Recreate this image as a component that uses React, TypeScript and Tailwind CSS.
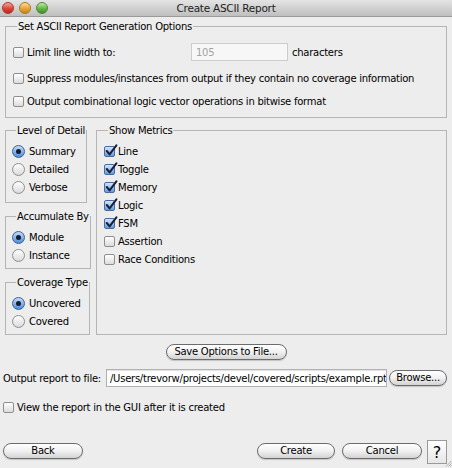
import React from "react";

function Check({ checked }: { checked?: boolean }) {
  return (
    <span
      className={
        checked
          ? "relative inline-block w-[11px] h-[11px] shrink-0 rounded-[2px] border border-[#4a6a9c] bg-linear-to-b from-[#d3e6fa] to-[#5f9ce2]"
          : "relative inline-block w-[11px] h-[11px] shrink-0 rounded-[2px] border border-[#8e8e8e] bg-linear-to-b from-white to-[#dcdcdc]"
      }
    >
      {checked && (
        <svg className="absolute -top-[3px] left-[0px]" width="13" height="13" viewBox="0 0 13 13">
          <path d="M1.8 7 L4.6 10.4 L11.4 1.4" stroke="#15203c" strokeWidth="2" fill="none" strokeLinecap="round" strokeLinejoin="round" />
        </svg>
      )}
    </span>
  );
}

function Radio({ on }: { on?: boolean }) {
  return (
    <span
      className={
        on
          ? "flex items-center justify-center w-[13px] h-[13px] shrink-0 rounded-full border border-[#3f5f93] bg-linear-to-b from-[#c4dcf7] to-[#4d8ddb]"
          : "flex items-center justify-center w-[13px] h-[13px] shrink-0 rounded-full border border-[#8e8e8e] bg-linear-to-b from-white to-[#dadada]"
      }
    >
      {on && <span className="w-[5px] h-[5px] rounded-full bg-[#121c33]" />}
    </span>
  );
}

function AquaButton({ label, className }: { label: string; className: string }) {
  return (
    <button
      className={
        "flex items-center justify-center rounded-full border border-[#6c6c6c] bg-linear-to-b from-white via-[#f1f1f1] to-[#d3d3d3] leading-none text-black shadow-[0_1px_1px_rgba(0,0,0,0.18)] " +
        className
      }
    >
      {label}
    </button>
  );
}

function RadioRow({ on, label }: { on?: boolean; label: string }) {
  return (
    <div className="flex h-[18px] items-center gap-[4px] whitespace-nowrap">
      <Radio on={on} />
      <span>{label}</span>
    </div>
  );
}

function CheckRow({ checked, label }: { checked?: boolean; label: string }) {
  return (
    <div className="flex h-[18px] items-center gap-[3px] whitespace-nowrap">
      <Check checked={checked} />
      <span>{label}</span>
    </div>
  );
}

function Legend({ children }: { children: React.ReactNode }) {
  return <legend className="ml-[4px] px-[1px] leading-[13px] whitespace-nowrap">{children}</legend>;
}

export default function App() {
  return (
    <div className="w-[452px] h-[468px] bg-[#ededed] flex flex-col text-[10px] tracking-[-0.25px] leading-[13px] text-black font-['DejaVu_Sans',sans-serif] overflow-hidden">
      {/* Title bar */}
      <div className="grid grid-cols-[1fr_auto_1fr] items-center h-[17px] shrink-0 bg-linear-to-b from-[#e4e4e4] to-[#bfbfbf] border-b border-[#9a9a9a]">
        <div className="flex items-center gap-[5px] pl-[2px]">
          <span className="w-[12px] h-[12px] rounded-full border border-[#a43a32] bg-linear-to-b from-[#f7a39c] via-[#e2483e] to-[#b8261d]" />
          <span className="w-[12px] h-[12px] rounded-full border border-[#a87a22] bg-linear-to-b from-[#fbdd9a] via-[#e9a93a] to-[#c98515]" />
          <span className="w-[12px] h-[12px] rounded-full border border-[#4b8a36] bg-linear-to-b from-[#c5eaa4] via-[#6cbc4b] to-[#3e8d2a]" />
        </div>
        <div className="text-[10.5px] text-[#222]">Create ASCII Report</div>
        <div />
      </div>

      <div className="flex flex-col flex-1 px-[5px] pt-[3px]">
        {/* Group 1 */}
        <fieldset className="h-[98px] border border-[#b5b5b5] pl-[7px]">
          <Legend>Set ASCII Report Generation Options</Legend>
          <div className="mt-[10px] flex h-[18px] items-center">
            <Check />
            <span className="ml-[3px] w-[164px]">Limit line width to:</span>
            <div className="w-[97px] h-[18px] border border-[#cdcdcd] bg-[#f7f7f7] text-[#a3a3a3] flex items-center pl-[4px]">105</div>
            <span className="ml-[4px]">characters</span>
          </div>
          <div className="mt-[8px]">
            <CheckRow label="Suppress modules/instances from output if they contain no coverage information" />
          </div>
          <div className="mt-[5px]">
            <CheckRow label="Output combinational logic vector operations in bitwise format" />
          </div>
        </fieldset>

        {/* Middle area */}
        <div className="mt-[6px] flex gap-[10px]">
          <div className="flex w-[81px] shrink-0 flex-col gap-[7px]">
            <fieldset className="h-[79px] border border-[#b5b5b5] pl-[6px]">
              <Legend>Level of Detail</Legend>
              <div className="mt-[5px]">
                <RadioRow on label="Summary" />
                <RadioRow label="Detailed" />
                <RadioRow label="Verbose" />
              </div>
            </fieldset>
            <fieldset className="h-[59px] border border-[#b5b5b5] pl-[6px]">
              <Legend>Accumulate By</Legend>
              <div className="mt-[5px]">
                <RadioRow on label="Module" />
                <RadioRow label="Instance" />
              </div>
            </fieldset>
            <fieldset className="h-[59px] border border-[#b5b5b5] pl-[6px]">
              <Legend>Coverage Type</Legend>
              <div className="mt-[5px]">
                <RadioRow on label="Uncovered" />
                <RadioRow label="Covered" />
              </div>
            </fieldset>
          </div>
          <fieldset className="flex-1 h-[211px] border border-[#b5b5b5] pl-[7px]">
            <Legend>Show Metrics</Legend>
            <div className="mt-[5px]">
              <CheckRow checked label="Line" />
              <CheckRow checked label="Toggle" />
              <CheckRow checked label="Memory" />
              <CheckRow checked label="Logic" />
              <CheckRow checked label="FSM" />
              <CheckRow label="Assertion" />
              <CheckRow label="Race Conditions" />
            </div>
          </fieldset>
        </div>

        {/* Save button */}
        <div className="mt-[9px] flex justify-center">
          <AquaButton label="Save Options to File..." className="h-[16px] w-[121px] whitespace-nowrap" />
        </div>

        {/* Output row */}
        <div className="mt-[9px] -ml-[2px] flex h-[18px] items-center whitespace-nowrap">
          <span className="w-[103px] shrink-0">Output report to file:</span>
          <div className="h-[18px] w-[281px] shrink-0 overflow-hidden border border-[#b1b1b1] bg-white pl-[3px] flex items-center shadow-[inset_0_1px_1px_rgba(0,0,0,0.12)]">
            /Users/trevorw/projects/devel/covered/scripts/example.rpt
          </div>
          <AquaButton label="Browse..." className="ml-[2px] h-[16px] w-[58px]" />
        </div>

        {/* View checkbox */}
        <div className="mt-[11px] -ml-[2px]">
          <CheckRow label="View the report in the GUI after it is created" />
        </div>

        {/* Bottom buttons */}
        <div className="mt-auto mb-[4px] -ml-[2px] flex items-start h-[24px]">
          <AquaButton label="Back" className="mt-[3px] h-[16px] w-[80px]" />
          <div className="flex-1" />
          <AquaButton label="Create" className="mt-[3px] h-[16px] w-[78px]" />
          <AquaButton label="Cancel" className="mt-[3px] ml-[7px] h-[16px] w-[80px]" />
          <div className="ml-[5px] flex h-[24px] w-[20px] items-center justify-center border border-[#9a9a9a] bg-linear-to-b from-white to-[#e6e6e6] text-[16px] tracking-normal">
            ?
          </div>
        </div>
      </div>
      {/* resize grip drawing */}
      <div className="-mt-[8px] flex justify-end pr-[0px] h-[8px]">
        <svg width="7" height="7" viewBox="0 0 7 7">
          <path d="M6.5 1 L1 6.5 M6.5 3.5 L3.5 6.5 M6.5 5.5 L5.5 6.5" stroke="#9a9a9a" strokeWidth="0.8" />
        </svg>
      </div>
    </div>
  );
}
